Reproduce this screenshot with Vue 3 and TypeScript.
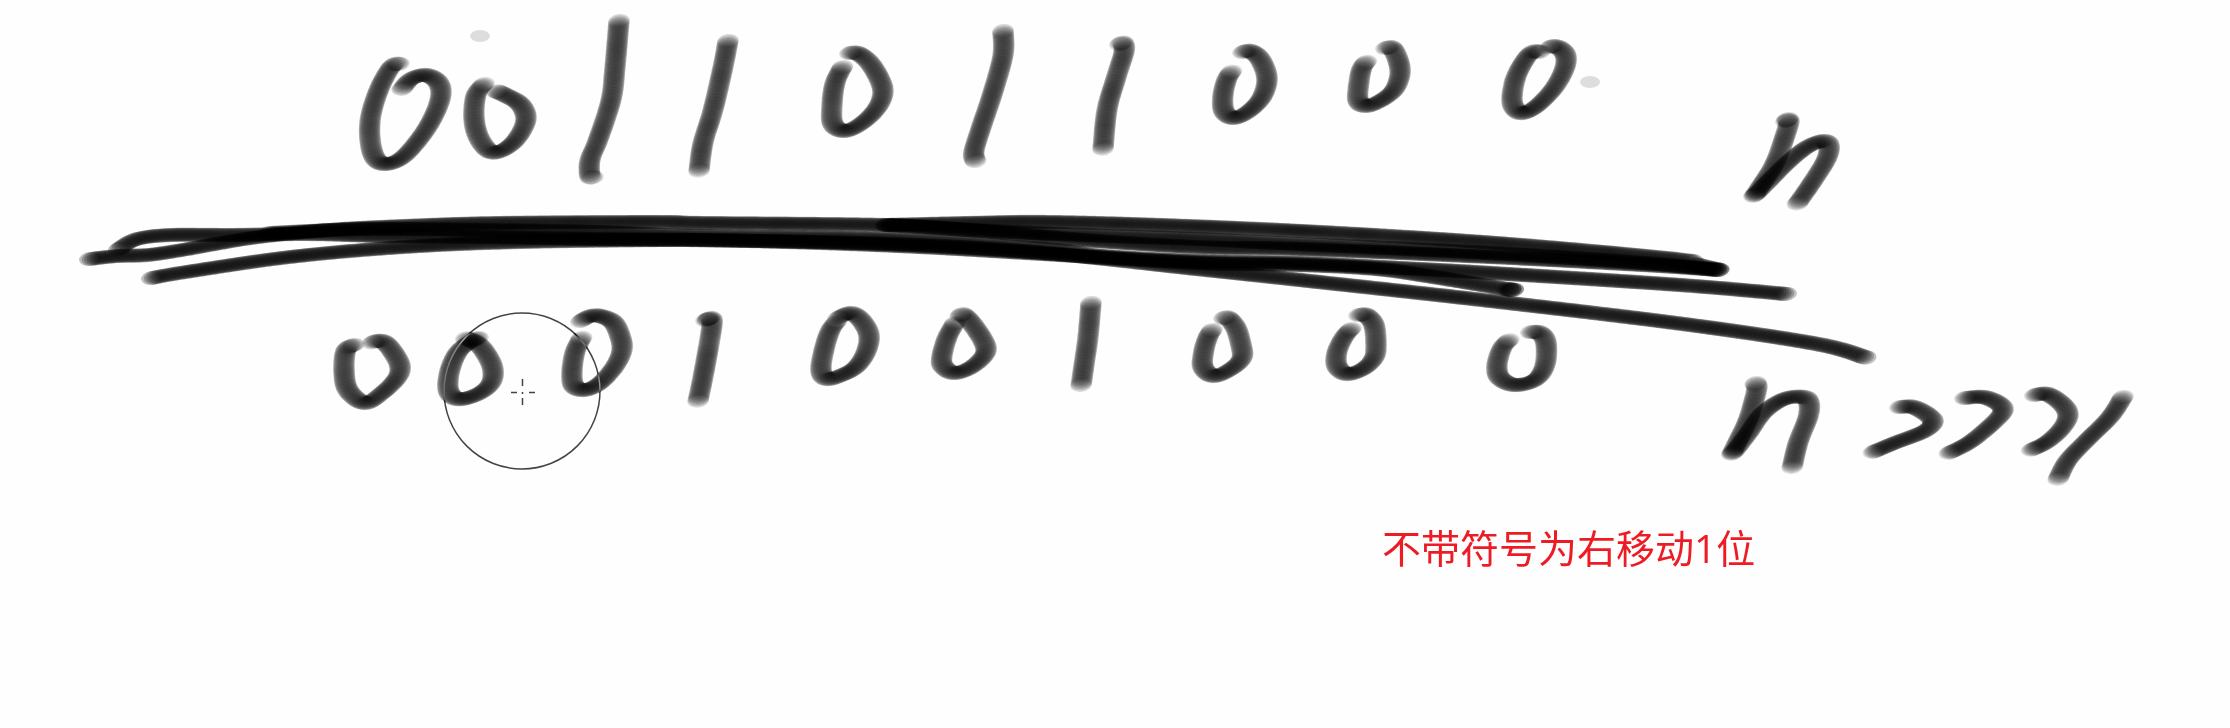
<script setup lang="ts">
type Point = [number, number]

interface Dab {
  x: number
  y: number
}

// Flat marker tip: each stroke is a run of translucent elliptical dabs.
const TIP_X = 11
const TIP_Y = 7

function parse(line: string): Point[] {
  return line.split(' ').map((pair) => pair.split(',').map(Number) as Point)
}

function curve(a: number, b: number, c: number, d: number, t: number): number {
  return 0.5 * (2 * b + (c - a) * t + (2 * a - 5 * b + 4 * c - d) * t * t + (3 * b - a - 3 * c + d) * t * t * t)
}

function stamp(line: string, spacing: number): Dab[] {
  const pts = parse(line)
  const dabs: Dab[] = [{ x: pts[0][0], y: pts[0][1] }]
  let last = dabs[0]
  for (let i = 0; i < pts.length - 1; i++) {
    const p0 = pts[Math.max(i - 1, 0)]
    const p1 = pts[i]
    const p2 = pts[i + 1]
    const p3 = pts[Math.min(i + 2, pts.length - 1)]
    const steps = Math.ceil(Math.hypot(p2[0] - p1[0], p2[1] - p1[1]) * 5)
    for (let s = 1; s <= steps; s++) {
      const t = s / steps
      const x = curve(p0[0], p1[0], p2[0], p3[0], t)
      const y = curve(p0[1], p1[1], p2[1], p3[1], t)
      if (Math.hypot(x - last.x, y - last.y) >= spacing) {
        last = { x: Math.round(x * 100) / 100, y: Math.round(y * 100) / 100 }
        dabs.push(last)
      }
    }
  }
  return dabs
}

const upperRow = [
  '399,64 392,66 380,87 371,115 370,139 375,158 386,164 403,157 423,134 436,111 441,93 437,81 425,75 411,79 402,89',
  '484,84 476,95 474,118 479,138 491,152 505,149 518,137 526,119 520,104 505,95 496,91',
  '619,21 615,67 611,100 598,140 590,160 590,176 594,177',
  '728,41 723,67 713,110 703,143 699,171',
  '850,53 857,53 868,61 878,76 883,92 877,108 862,123 845,131 833,124 832,105 835,83 843,66',
  '1003,31 1003,55 993,92 981,128 974,151 975,160 977,161',
  '1120,44 1123,43 1124,52 1116,78 1107,110 1103,149',
  '1243,52 1250,51 1260,59 1267,78 1262,97 1249,111 1234,118 1224,111 1223,95 1227,79 1232,71',
  '1386,48 1392,48 1398,60 1400,74 1394,90 1380,101 1366,106 1358,100 1359,82 1362,68 1367,61',
  '1540,52 1532,52 1523,63 1515,80 1512,100 1516,110 1524,113 1538,105 1554,88 1564,70 1566,57 1561,49 1553,46 1549,48',
]

const lowerRow = [
  '354,345 346,350 344,370 348,390 365,403 382,393 397,378 400,366 393,352 384,342 376,341 372,343',
  '478,338 470,342 458,352 450,370 448,388 453,397 463,399 480,393 491,383 493,370 488,357 478,344 465,338',
  '581,321 590,316 600,316 613,322 620,336 622,350 615,366 600,383 585,390 574,386 572,372 575,352 582,337',
  '709,319 706,320 711,318 712,325 708,350 703,377 698,401',
  '838,318 850,313 861,320 869,335 866,352 856,367 842,375 827,379 821,370 824,350 830,331 837,321',
  '955,323 947,338 942,356 943,366 954,373 970,368 983,357 986,348 980,335 969,320 962,314 960,317',
  '1091,303 1088,337 1084,365 1081,386',
  '1224,318 1228,318 1236,328 1241,345 1242,358 1231,369 1214,376 1203,367 1204,350 1208,337 1212,330',
  '1359,315 1366,315 1374,325 1376,345 1374,358 1363,369 1347,374 1337,366 1337,352 1344,337 1351,329',
  '1531,332 1540,333 1546,343 1545,365 1535,380 1515,385 1500,378 1497,365 1502,348 1509,340',
]

const labels = [
  '1788,119 1786,121 1789,121 1786,133 1775,163 1760,187 1754,196 1767,183 1787,163 1807,147 1823,141 1829,146 1826,160 1811,184 1797,204',
  '1756,383 1755,385 1757,386 1755,397 1748,420 1737,443 1732,454 1747,435 1763,413 1784,399 1803,397 1809,403 1808,417 1798,443 1792,468',
  '1900,407 1913,407 1928,415 1933,423 1923,432 1897,442 1873,452',
  '1965,398 1983,397 1998,403 2003,411 1993,423 1970,442 1949,453',
  '2035,395 2047,394 2062,404 2068,415 2062,428 2047,442 2031,450',
  '2123,397 2110,417 2087,440 2068,460 2058,479',
]

const dividers = [
  '90,259 117,256 148,255 182,250 221,243 259,237 328,230 404,226 500,223 660,222 700,223 884,225 968,230 1083,240 1197,247 1300,249 1491,257 1644,265 1719,270',
  '119,249 137,239 171,235 232,235 309,234 385,236 481,237 596,239 750,241 900,246 1044,254 1197,263 1300,265 1377,269 1434,277 1512,290',
  '269,233 366,229 481,230 596,232 700,236 891,239 1044,249 1102,256 1197,261 1300,263 1400,268 1491,273 1680,285 1786,294',
  '152,278 186,272 290,257 404,247 519,242 660,240 700,240 891,244 1044,253 1197,269 1300,280 1491,301 1683,324 1817,344 1867,358',
  '886,225 968,223 1044,222 1159,225 1300,231 1453,240 1568,249 1683,260 1694,264 1719,270',
  '1508,289 1514,290 1510,290 1515,290',
  '886,225 968,230 1083,235 1197,239 1300,244 1491,253 1644,263 1719,270',
]

const glyphDabs: Dab[] = [...upperRow, ...lowerRow, ...labels].flatMap((line) => stamp(line, 1.35))
const dividerDabs: Dab[] = dividers.flatMap((line) => stamp(line, 2.5))
const strayDots: Point[] = [[480, 36], [1590, 82]]
</script>

<template>
  <main class="board">
    <svg class="sketch" viewBox="0 0 2230 728" role="img" aria-label="0011011000 n, 0001001000 n >>> 1">
      <defs>
        <ellipse id="tip" :rx="TIP_X" :ry="TIP_Y" transform="rotate(-8)" />
      </defs>
      <g class="divider">
        <use v-for="(d, i) in dividerDabs" :key="i" href="#tip" :x="d.x" :y="d.y" />
      </g>
      <g class="glyphs">
        <use v-for="(d, i) in glyphDabs" :key="i" href="#tip" :x="d.x" :y="d.y" />
        <ellipse v-for="(p, i) in strayDots" :key="'dot' + i" :cx="p[0]" :cy="p[1]" rx="10" ry="6" />
      </g>
      <g class="cursor">
        <circle cx="522" cy="391" r="78" />
        <path d="M522.5 379v7M522.5 392v2M522.5 398v7M511 392.5h6M529 392.5h6" />
      </g>
      <text class="note" x="1382" y="563">不带符号为右移动1位</text>
    </svg>
  </main>
</template>

<style>
body {
  margin: 0;
  background: #fefefe;
}
</style>

<style scoped>
.board {
  background: #fefefe;
  isolation: isolate;
}

.sketch {
  display: block;
  width: 100%;
  height: auto;
}

.glyphs {
  fill: #000;
  fill-opacity: 0.13;
}

.divider {
  fill: #000;
  fill-opacity: 0.24;
}

.cursor {
  fill: none;
  stroke: #bbb;
  stroke-width: 1.5;
  mix-blend-mode: difference;
}

.note {
  fill: #ed1c24;
  font-family: "Open Sans", "Noto Sans CJK SC", sans-serif;
  font-size: 39px;
}
</style>
